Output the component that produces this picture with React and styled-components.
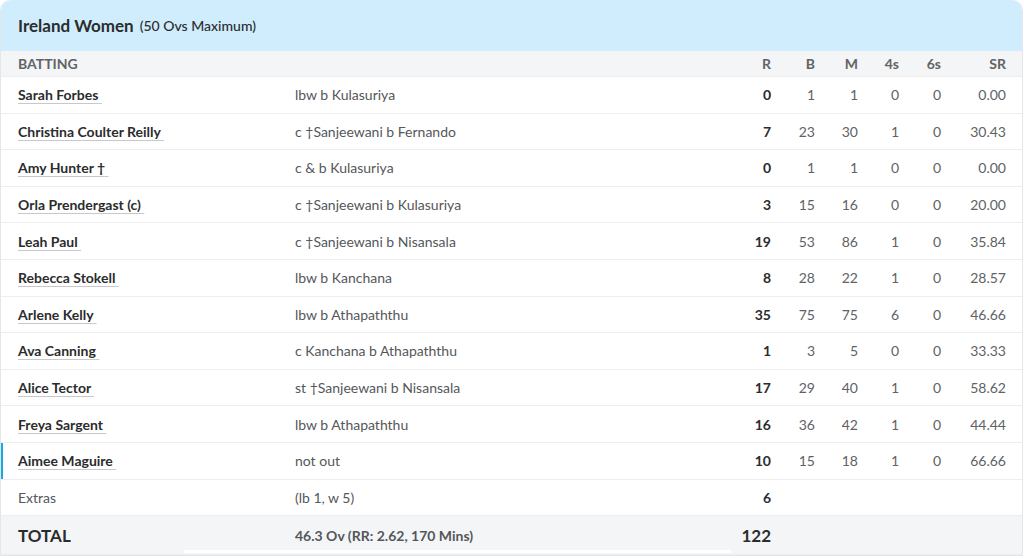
import React from "react";
import styled, { createGlobalStyle } from "styled-components";

const GlobalStyle = createGlobalStyle`
  body {
    margin: 0;
    background: #ffffff;
    font-family: Lato, "Noto Sans", sans-serif;
    color: #2b2c2d;
  }
`;

const Card = styled.div`
  box-sizing: border-box;
  width: 1023px;
  border: 1px solid #e4e6e9;
  border-top: none;
  border-radius: 10px 10px 0 0;
  overflow: hidden;
  background: #ffffff;
`;

const Header = styled.div`
  height: 51px;
  display: flex;
  align-items: center;
  gap: 6px;
  padding: 0 17px;
  background: #cfedfc;
  border-radius: 10px 10px 0 0;
`;

const Team = styled.span`
  font-size: 17px;
  font-weight: 700;
  color: #2b2c2d;
`;

const Overs = styled.span`
  font-size: 14px;
  font-weight: 500;
  color: #2b2c2d;
`;

const Row = styled.div`
  position: relative;
  display: grid;
  grid-template-columns: 277px 1fr 60px 44px 43px 41px 42px 65px;
  align-items: center;
  padding: 0 16px 0 17px;
  height: ${(p) => p.$h || 35.6}px;
  background: ${(p) => p.$bg || "#ffffff"};
  border-bottom: 1px solid #eceef1;
  font-size: 14px;
  box-shadow: ${(p) => (p.$active ? "inset 2px 0 0 #17a8e6" : "none")};
`;

const HeadCell = styled.div`
  font-size: 14px;
  font-weight: 700;
  color: #616364;
  text-align: ${(p) => (p.$right ? "right" : "left")};
`;

const Name = styled.span`
  font-weight: 700;
  color: #2b2c2d;
  text-decoration: underline;
  text-decoration-color: #c6c8cb;
  text-underline-offset: 3px;
  text-decoration-thickness: 1px;
`;

const Dismissal = styled.div`
  color: #55575a;
  font-weight: ${(p) => (p.$bold ? 700 : 400)};
  font-size: 14px;
`;

const Num = styled.div`
  text-align: right;
  color: ${(p) => (p.$bold ? "#2b2c2d" : "#606265")};
  font-weight: ${(p) => (p.$bold ? 700 : 400)};
  font-size: ${(p) => (p.$big ? 17 : 14)}px;
`;

const Label = styled.div`
  color: ${(p) => (p.$big ? "#2b2c2d" : "#55575a")};
  font-weight: ${(p) => (p.$big ? 700 : 400)};
  font-size: ${(p) => (p.$big ? 17 : 14)}px;
`;

const TotalRow = styled(Row)`
  &::after {
    content: "";
    position: absolute;
    left: 183px;
    width: 547px;
    bottom: 1px;
    height: 3px;
    background: #ffffff;
  }
`;

const batters = [
  ["Sarah Forbes", "lbw b Kulasuriya", 0, 1, 1, 0, 0, "0.00"],
  ["Christina Coulter Reilly", "c †Sanjeewani b Fernando", 7, 23, 30, 1, 0, "30.43"],
  ["Amy Hunter †", "c & b Kulasuriya", 0, 1, 1, 0, 0, "0.00"],
  ["Orla Prendergast (c)", "c †Sanjeewani b Kulasuriya", 3, 15, 16, 0, 0, "20.00"],
  ["Leah Paul", "c †Sanjeewani b Nisansala", 19, 53, 86, 1, 0, "35.84"],
  ["Rebecca Stokell", "lbw b Kanchana", 8, 28, 22, 1, 0, "28.57"],
  ["Arlene Kelly", "lbw b Athapaththu", 35, 75, 75, 6, 0, "46.66"],
  ["Ava Canning", "c Kanchana b Athapaththu", 1, 3, 5, 0, 0, "33.33"],
  ["Alice Tector", "st †Sanjeewani b Nisansala", 17, 29, 40, 1, 0, "58.62"],
  ["Freya Sargent", "lbw b Athapaththu", 16, 36, 42, 1, 0, "44.44"],
  ["Aimee Maguire", "not out", 10, 15, 18, 1, 0, "66.66"],
];

export default function App() {
  return (
    <>
      <GlobalStyle />
      <Card>
        <Header>
          <Team>Ireland Women</Team>
          <Overs>(50 Ovs Maximum)</Overs>
        </Header>
        <Row $bg="#f4f5f7" $h={25}>
          <HeadCell>BATTING</HeadCell>
          <HeadCell />
          <HeadCell $right>R</HeadCell>
          <HeadCell $right>B</HeadCell>
          <HeadCell $right>M</HeadCell>
          <HeadCell $right>4s</HeadCell>
          <HeadCell $right>6s</HeadCell>
          <HeadCell $right>SR</HeadCell>
        </Row>
        {batters.map(([name, how, r, b, m, fours, sixes, sr]) => (
          <Row key={name} $active={how === "not out"}>
            <div>
              <Name>{name}{"\u00a0"}</Name>
            </div>
            <Dismissal>{how}</Dismissal>
            <Num $bold>{r}</Num>
            <Num>{b}</Num>
            <Num>{m}</Num>
            <Num>{fours}</Num>
            <Num>{sixes}</Num>
            <Num>{sr}</Num>
          </Row>
        ))}
        <Row>
          <Label>Extras</Label>
          <Dismissal>(lb 1, w 5)</Dismissal>
          <Num $bold>6</Num>
        </Row>
        <TotalRow $bg="#f4f5f7" $h={38}>
          <Label $big>TOTAL</Label>
          <Dismissal $bold>46.3 Ov (RR: 2.62, 170 Mins)</Dismissal>
          <Num $bold $big>122</Num>
        </TotalRow>
      </Card>
    </>
  );
}
